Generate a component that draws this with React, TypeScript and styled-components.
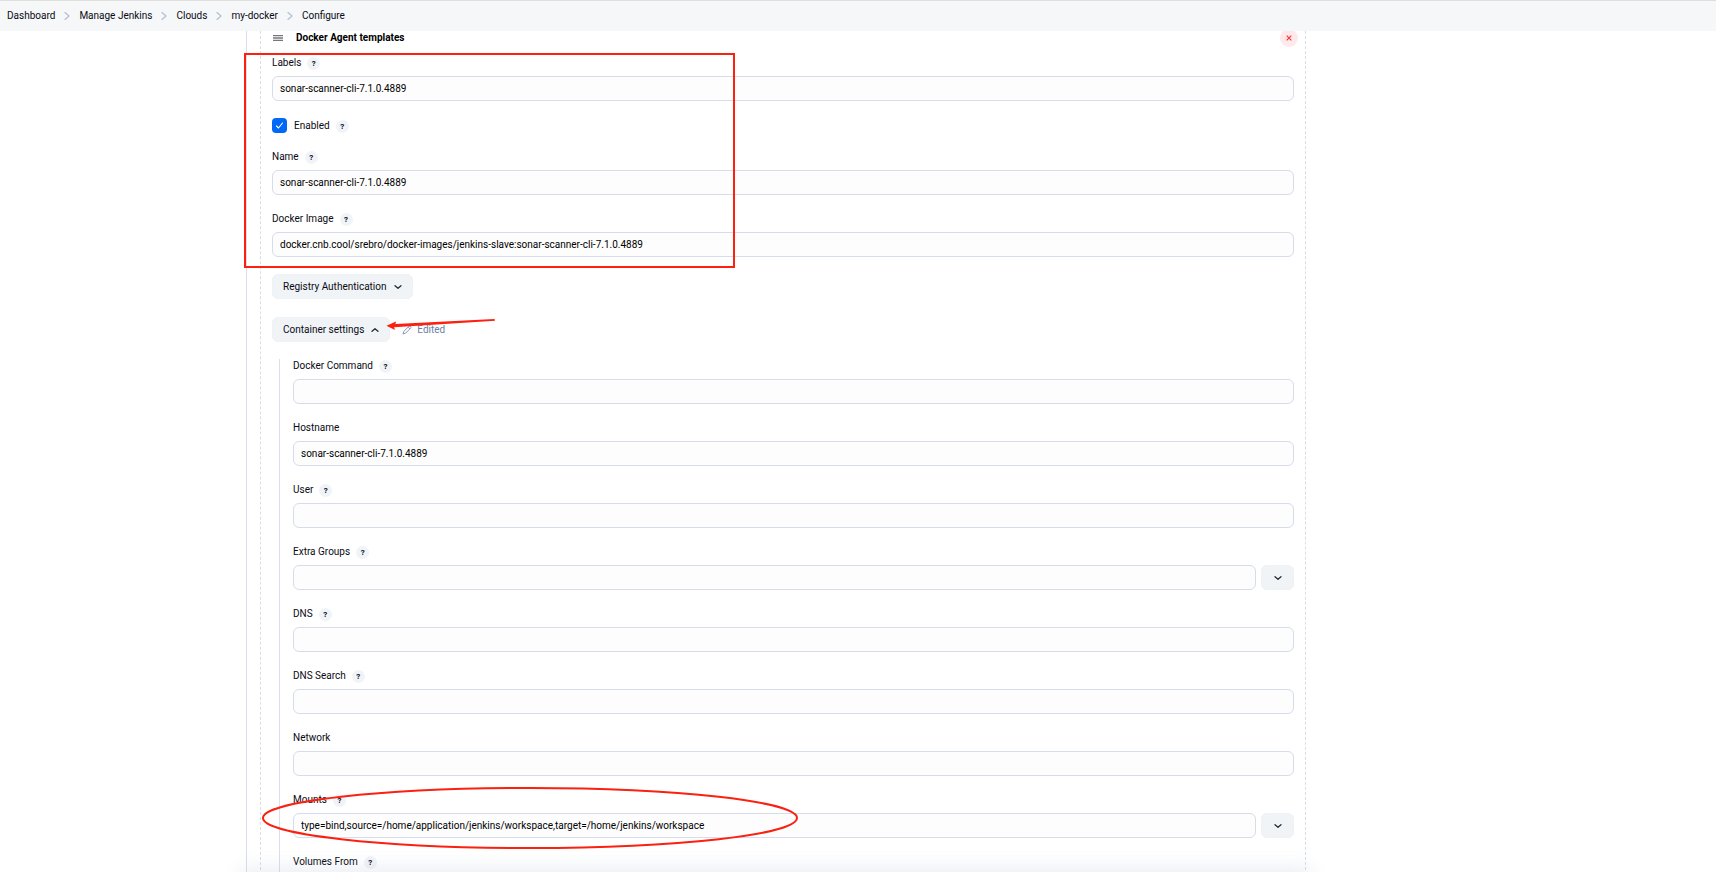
import React from "react";
import styled, { createGlobalStyle } from "styled-components";

const FONT = 'Roboto, "Open Sans", "Liberation Sans", sans-serif';

const GlobalStyle = createGlobalStyle`
  *, *::before, *::after { box-sizing: border-box; }
  body { margin: 0; background: #fff; }
  body, button, input { font-family: ${FONT}; font-size: 10px; line-height: 12px; color: #0a0a14; }
`;

const Page = styled.div`
  position: relative;
  display: flex;
  flex-direction: column;
  height: 100vh;
  overflow: hidden;
`;

const Breadcrumbs = styled.nav`
  flex: none;
  border-top: 1px solid #dfe0dc;
  background: #f5f7f9;
`;

const Trail = styled.ol`
  display: flex;
  align-items: center;
  gap: 9px;
  height: 30px;
  margin: 0;
  padding: 0 7px;
  list-style: none;
`;

const Crumb = styled.li`
  display: flex;
  align-items: center;
  gap: 9px;
`;

const CrumbLink = styled.a`
  color: #0a0a14;
  text-decoration: none;
`;

const Content = styled.main`
  flex: 1;
  min-height: 0;
  overflow: hidden;
  position: relative;
  padding: 0 410px 0 246px;
`;

const Cloud = styled.section`
  border-left: 1px solid #d9dfec;
  padding-left: 13px;
`;

const Template = styled.form`
  border: dashed #d8dde6;
  border-width: 0 1px;
  padding: 0 11px;
`;

const TemplateHeader = styled.header`
  display: flex;
  align-items: center;
  height: 14px;
  margin: 0 -4px 12px 0;
  padding-left: 1px;
`;

const Title = styled.h2`
  flex: 1;
  margin: 0 0 0 12px;
  font-size: 10px;
  line-height: 12px;
  font-weight: 700;
  color: #000;
`;

const RemoveButton = styled.button`
  display: grid;
  place-items: center;
  width: 18px;
  height: 18px;
  padding: 0;
  border: 0;
  border-radius: 50%;
  background: #ffe9ea;
  color: #f5383e;
`;

const Fields = styled.div`
  display: flex;
  flex-direction: column;
  gap: 18px;
`;

const BasicFields = styled(Fields)`
  padding-bottom: 17px;
`;

const LabelRow = styled.div`
  display: flex;
  align-items: flex-start;
  gap: 6px;
  height: 13px;
  margin-bottom: 6px;
`;

const CheckRow = styled.div`
  display: flex;
  align-items: flex-end;
  gap: 6px;
  height: 14px;
`;

const CheckLabel = styled.label`
  display: flex;
  align-items: center;
  gap: 7px;
`;

const Checkbox = styled.input`
  appearance: none;
  width: 15px;
  height: 15px;
  margin: 0;
  border-radius: 4px;
  background: #0068f5
    url("data:image/svg+xml,%3Csvg xmlns='http://www.w3.org/2000/svg' viewBox='0 0 15 15' fill='none' stroke='white' stroke-width='1.1' stroke-linecap='round' stroke-linejoin='round'%3E%3Cpath d='M4.5 8l2 2 4-5'/%3E%3C/svg%3E");
`;

const HelpButton = styled.button`
  display: grid;
  place-items: center;
  width: 13px;
  height: 13px;
  padding: 0;
  border: 0;
  border-radius: 50%;
  background: #f0f4f8;
  font-size: 8px;
  line-height: 13px;
  font-weight: 700;
`;

const Controls = styled.div`
  display: flex;
  gap: 5px;
`;

const TextInput = styled.input`
  flex: 1;
  min-width: 0;
  height: 25px;
  padding: 0 7px;
  border: 1px solid #d7dcea;
  border-radius: 6px;
  background: #fdfdfd;
  color: #000;
  outline: 0;
`;

const ExpandButton = styled.button`
  display: grid;
  place-items: center;
  width: 33px;
  height: 25px;
  padding: 0;
  border: 1px solid #eef1f5;
  border-radius: 6px;
  background: #f1f4f7;
`;

const SectionList = styled.div`
  display: flex;
  flex-direction: column;
  gap: 18px;
`;

const SectionRow = styled.div`
  display: flex;
  align-items: center;
  gap: 12px;
`;

const SectionButton = styled.button`
  display: flex;
  align-items: center;
  gap: 7px;
  height: 25px;
  padding: 0 10px;
  border: 1px solid #eef1f5;
  border-radius: 6px;
  background: #f1f4f7;
`;

const Edited = styled.span`
  display: flex;
  align-items: center;
  gap: 5px;
  color: #6b7fa6;
`;

const Nested = styled.div`
  margin: 17px 0 0 7px;
  padding: 1px 0 0 13px;
  border-left: 1px solid #d9dfec;
`;

const BottomShade = styled.div`
  position: absolute;
  left: 246px;
  right: 410px;
  bottom: -10px;
  height: 10px;
  box-shadow: 0 0 18px 4px rgba(120, 140, 180, 0.16);
  pointer-events: none;
`;

const Marks = styled.svg`
  position: absolute;
  left: 0;
  top: 0;
  width: 840px;
  height: 872px;
  pointer-events: none;
`;

const Chevron = ({ up = false }: { up?: boolean }) => (
  <svg width="8" height="6" viewBox="0 0 8 6" fill="none" stroke="#2a2a35" strokeWidth="1.3" strokeLinecap="round" strokeLinejoin="round" aria-hidden="true">
    <path d={up ? "M1 4.3L4 1.7L7 4.3" : "M1 1.7L4 4.3L7 1.7"} />
  </svg>
);

const CrumbArrow = () => (
  <svg width="6" height="8" viewBox="0 0 6 8" fill="none" stroke="#b3bfd4" strokeWidth="1.2" strokeLinecap="round" strokeLinejoin="round" aria-hidden="true">
    <path d="M1 0.5L5 4L1 7.5" />
  </svg>
);

const DragHandle = () => (
  <svg width="11" height="6" viewBox="0 0 11 6" fill="#77777f" aria-hidden="true">
    <path d="M0 0h10v1.3H0zM0 2.3h10v1.4H0zM0 4.7h10V6H0z" />
  </svg>
);

const Cross = () => (
  <svg width="6" height="6" viewBox="0 0 6 6" stroke="currentColor" strokeWidth="1.2" aria-hidden="true">
    <path d="M0.7 0.7L5.3 5.3M5.3 0.7L0.7 5.3" />
  </svg>
);

const Pencil = () => (
  <svg width="10" height="10" viewBox="0 0 10 10" fill="none" stroke="#7c8fb3" strokeWidth="0.9" strokeLinejoin="round" aria-hidden="true">
    <path d="M1 9L1.8 6.4L6.8 1.4Q7.7 .6 8.6 1.4Q9.4 2.3 8.6 3.2L3.6 8.2ZM6.1 2.2L7.9 3.9" />
  </svg>
);

interface FieldProps {
  id: string;
  label: string;
  value?: string;
  help?: boolean;
  expandable?: boolean;
}

const Help = ({ topic }: { topic: string }) => (
  <HelpButton type="button" aria-label={`Help for ${topic}`}>?</HelpButton>
);

const Field = ({ id, label, value = "", help = true, expandable = false }: FieldProps) => (
  <div>
    <LabelRow>
      <label htmlFor={id}>{label}</label>
      {help && <Help topic={label} />}
    </LabelRow>
    <Controls>
      <TextInput id={id} type="text" defaultValue={value} spellCheck={false} />
      {expandable && (
        <ExpandButton type="button" aria-label={`Expand ${label}`}>
          <Chevron />
        </ExpandButton>
      )}
    </Controls>
  </div>
);

const crumbs = ["Dashboard", "Manage Jenkins", "Clouds", "my-docker", "Configure"];

const containerFields: FieldProps[] = [
  { id: "command", label: "Docker Command" },
  { id: "hostname", label: "Hostname", value: "sonar-scanner-cli-7.1.0.4889", help: false },
  { id: "user", label: "User" },
  { id: "groups", label: "Extra Groups", expandable: true },
  { id: "dns", label: "DNS" },
  { id: "dns-search", label: "DNS Search" },
  { id: "network", label: "Network", help: false },
  {
    id: "mounts",
    label: "Mounts",
    value: "type=bind,source=/home/application/jenkins/workspace,target=/home/jenkins/workspace",
    expandable: true,
  },
  { id: "volumes", label: "Volumes From", expandable: true },
];

export default function App() {
  return (
    <Page>
      <GlobalStyle />
      <Breadcrumbs aria-label="Breadcrumb">
        <Trail>
          {crumbs.map((name, i) => (
            <Crumb key={name}>
              {i > 0 && <CrumbArrow />}
              <CrumbLink href="#">{name}</CrumbLink>
            </Crumb>
          ))}
        </Trail>
      </Breadcrumbs>
      <Content>
        <Cloud>
          <Template>
            <TemplateHeader>
              <DragHandle />
              <Title>Docker Agent templates</Title>
              <RemoveButton type="button" aria-label="Delete template">
                <Cross />
              </RemoveButton>
            </TemplateHeader>
            <BasicFields>
              <Field id="labels" label="Labels" value="sonar-scanner-cli-7.1.0.4889" />
              <CheckRow>
                <CheckLabel>
                  <Checkbox type="checkbox" defaultChecked />
                  Enabled
                </CheckLabel>
                <Help topic="Enabled" />
              </CheckRow>
              <Field id="name" label="Name" value="sonar-scanner-cli-7.1.0.4889" />
              <Field
                id="image"
                label="Docker Image"
                value="docker.cnb.cool/srebro/docker-images/jenkins-slave:sonar-scanner-cli-7.1.0.4889"
              />
            </BasicFields>
            <SectionList>
              <SectionRow>
                <SectionButton type="button" aria-expanded="false">
                  Registry Authentication
                  <Chevron />
                </SectionButton>
              </SectionRow>
              <SectionRow>
                <SectionButton type="button" aria-expanded="true">
                  Container settings
                  <Chevron up />
                </SectionButton>
                <Edited>
                  <Pencil />
                  Edited
                </Edited>
              </SectionRow>
            </SectionList>
            <Nested>
              <Fields>
                {containerFields.map((field) => (
                  <Field key={field.id} {...field} />
                ))}
              </Fields>
            </Nested>
          </Template>
        </Cloud>
      </Content>
      <BottomShade />
      <Marks viewBox="0 0 840 872" fill="none" stroke="#fb2010" strokeWidth="2" aria-hidden="true">
        <rect x="245" y="54" width="489" height="213" />
        <ellipse cx="530" cy="818" rx="267" ry="30" />
        <path d="M494.500 319L495 320.800L394 327.300L395 330L386.500 325.700L396 321.500L395.500 324Z" fill="#fb2010" stroke="none" />
      </Marks>
    </Page>
  );
}
